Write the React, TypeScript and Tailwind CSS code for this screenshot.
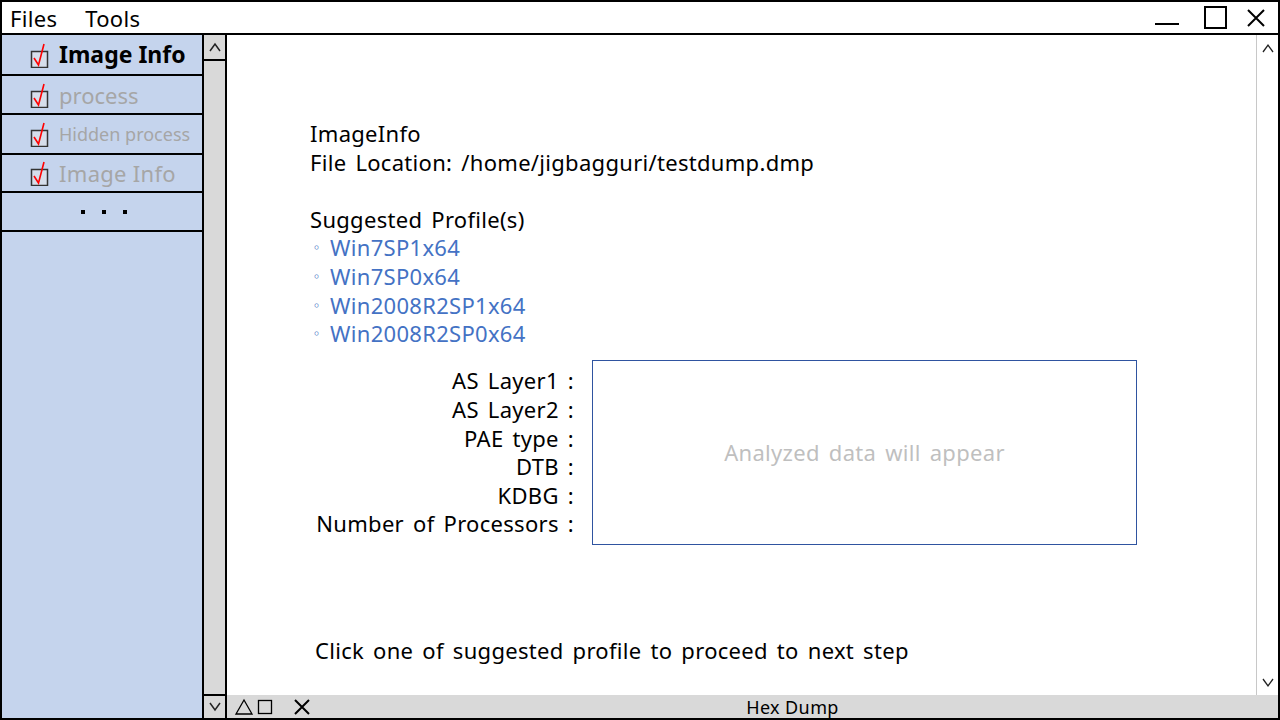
import React from 'react';

const FONT = { fontFamily: '"Noto Sans", "Noto Sans CJK KR", sans-serif' };

function CheckBox() {
  return (
    <svg width="20" height="26" viewBox="0 0 20 26" className="shrink-0">
      <rect x="1.5" y="9.5" width="16" height="16" fill="#d6deeb" stroke="#333" strokeWidth="1.5" />
      <path d="M4 16 L8.5 23 L14 2" fill="none" stroke="#ff0000" strokeWidth="1.6" />
    </svg>
  );
}

function SideItem({ label, className, h }: { label: string; className: string; h: string }) {
  return (
    <div className={`flex items-center border-b-2 border-black pl-[28px] gap-[9px] ${h}`}>
      <CheckBox />
      <span className={className}>{label}</span>
    </div>
  );
}

export default function App() {
  const profiles = ['Win7SP1x64', 'Win7SP0x64', 'Win2008R2SP1x64', 'Win2008R2SP0x64'];
  const labels = ['AS Layer1 :', 'AS Layer2 :', 'PAE type :', 'DTB :', 'KDBG :', 'Number of Processors :'];

  return (
    <div className="w-[1280px] h-[720px] border-2 border-black flex flex-col bg-white text-black overflow-hidden" style={FONT}>
      {/* Menu bar */}
      <div className="h-[33px] shrink-0 border-b-2 border-black flex items-center">
        <span className="ml-[8px] text-[22px] tracking-[0.3px] leading-none">Files</span>
        <span className="ml-[28px] text-[22px] tracking-[0.3px] leading-none">Tools</span>
        <div className="ml-auto flex items-center h-full">
          <svg width="26" height="20" viewBox="0 0 26 20" className="mr-[23px]">
            <line x1="0" y1="16" x2="24" y2="16" stroke="#000" strokeWidth="2" />
          </svg>
          <svg width="24" height="24" viewBox="0 0 24 24" className="mr-[18px]">
            <rect x="1" y="1" width="21" height="21" fill="none" stroke="#000" strokeWidth="2" />
          </svg>
          <svg width="20" height="20" viewBox="0 0 20 20" className="mr-[12px]">
            <path d="M2 2 L18 18 M18 2 L2 18" stroke="#000" strokeWidth="2" />
          </svg>
        </div>
      </div>

      <div className="flex-1 flex min-h-0">
        {/* Sidebar */}
        <div className="w-[202px] shrink-0 bg-[#c5d4ed] border-r-2 border-black flex flex-col">
          <SideItem h="h-[41px]" label="Image Info" className="text-[23px] font-bold leading-none" />
          <SideItem h="h-[39px]" label="process" className="text-[22px] text-[#a6a6a6] leading-none" />
          <SideItem h="h-[40px]" label="Hidden process" className="text-[18px] text-[#a6a6a6] leading-none" />
          <SideItem h="h-[38px]" label="Image Info" className="text-[22px] tracking-[0.3px] text-[#a6a6a6] leading-none" />
          <div className="h-[39px] border-b-2 border-black flex items-center justify-center gap-[17px] pl-[4px]">
            <span className="w-[4px] h-[4px] bg-black" />
            <span className="w-[4px] h-[4px] bg-black" />
            <span className="w-[4px] h-[4px] bg-black" />
          </div>
        </div>
        {/* Sidebar scrollbar */}
        <div className="w-[23px] shrink-0 bg-[#d9d9d9] border-r-2 border-black flex flex-col">
          <div className="h-[26px] border-b-2 border-black bg-[#d9d9d9] flex items-center justify-center">
            <svg width="12" height="10" viewBox="0 0 12 10"><path d="M1 9 L6 2 L11 9" fill="none" stroke="#222" strokeWidth="1.5" /></svg>
          </div>
          <div className="flex-1" />
          <div className="h-[24px] border-t-2 border-black flex items-center justify-center">
            <svg width="12" height="10" viewBox="0 0 12 10"><path d="M1 1 L6 8 L11 1" fill="none" stroke="#222" strokeWidth="1.5" /></svg>
          </div>
        </div>

        {/* Main */}
        <div className="flex-1 flex flex-col min-w-0">
          <div className="flex-1 flex min-h-0">
            <div className="flex-1 pl-[83px] pt-[84px] text-[22px] tracking-[0.3px] [word-spacing:3px] leading-[28.6px]">
              <div>ImageInfo</div>
              <div>File Location: /home/jigbagguri/testdump.dmp</div>
              <div className="h-[28.6px]" />
              <div>Suggested Profile(s)</div>
              {profiles.map((p) => (
                <div key={p} className="flex items-center text-[#4472c4]">
                  <span className="text-[13px] text-[#4472c4] w-[20px]">◦</span>
                  <span>{p}</span>
                </div>
              ))}
              <div className="flex items-center mt-[12px]">
                <div className="w-[264px] text-right">
                  {labels.map((l) => (
                    <div key={l}>{l}</div>
                  ))}
                </div>
                <div className="ml-[18px] w-[545px] h-[185px] border border-[#2f54a0] flex items-center justify-center">
                  <span className="text-[#bfbfbf]">Analyzed data will appear</span>
                </div>
              </div>
              <div className="mt-[91px] ml-[5px]">Click one of suggested profile to proceed to next step</div>
            </div>
            {/* Right scrollbar */}
            <div className="w-[22px] shrink-0 border-l border-[#c8c8c8] flex flex-col">
              <div className="h-[26px] flex items-center justify-center">
                <svg width="12" height="10" viewBox="0 0 12 10"><path d="M1 9 L6 2 L11 9" fill="none" stroke="#222" strokeWidth="1.3" /></svg>
              </div>
              <div className="flex-1" />
              <div className="h-[24px] flex items-center justify-center">
                <svg width="12" height="10" viewBox="0 0 12 10"><path d="M1 1 L6 8 L11 1" fill="none" stroke="#222" strokeWidth="1.3" /></svg>
              </div>
            </div>
          </div>
          {/* Bottom bar */}
          <div className="h-[23px] shrink-0 bg-[#d9d9d9] flex items-center relative">
            <svg width="20" height="18" viewBox="0 0 20 18" className="ml-[7px]">
              <path d="M10 2 L18 16 L2 16 Z" fill="none" stroke="#000" strokeWidth="1.3" />
            </svg>
            <svg width="16" height="16" viewBox="0 0 16 16" className="ml-[3px]">
              <rect x="1.5" y="1.5" width="13" height="13" fill="none" stroke="#000" strokeWidth="1.3" />
            </svg>
            <svg width="18" height="18" viewBox="0 0 18 18" className="ml-[20px]">
              <path d="M2 2 L16 16 M16 2 L2 16" stroke="#000" strokeWidth="2" />
            </svg>
            <span className="absolute left-0 right-0 pl-[80px] text-center text-[18px] tracking-[0.4px] leading-none pointer-events-none">Hex Dump</span>
          </div>
        </div>
      </div>
    </div>
  );
}
